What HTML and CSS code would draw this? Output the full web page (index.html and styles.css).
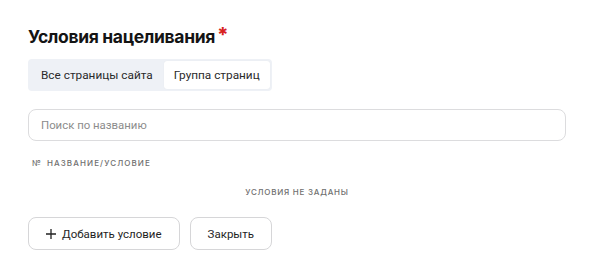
FILE: index.html
```html
<!DOCTYPE html>
<html lang="ru">
<head>
<meta charset="utf-8">
<link rel="stylesheet" href="styles.css">
</head>
<body>
<div class="panel">
  <h2 class="title">Условия нацеливания<span class="req">*</span></h2>
  <div class="tabs">
    <div class="tab">Все страницы сайта</div>
    <div class="tab active">Группа страниц</div>
  </div>
  <div class="search">
    <input class="search-input" type="text" placeholder="Поиск по названию">
  </div>
  <div class="thead"><span class="num">№</span><span>Название/условие</span></div>
  <div class="empty">Условия не заданы</div>
  <div class="actions">
    <button class="btn"><svg class="plus" width="10" height="10" viewBox="0 0 10 10"><path d="M5 0v10M0 5h10" stroke="#222" stroke-width="1.3"/></svg>Добавить условие</button>
    <button class="btn">Закрыть</button>
  </div>
</div>
</body>
</html>
```
FILE: styles.css
```css
html, body {
  margin: 0;
  padding: 0;
  background: #fff;
}
body {
  font-family: "Roboto", "Noto Sans", sans-serif;
  color: #1f1f1f;
}
.panel {
  padding: 25px 26px 0 28px;
}
.title {
  margin: 0;
  font-family: "Inter", "Noto Sans", sans-serif;
  font-size: 17.5px;
  font-weight: 700;
  line-height: 24px;
  letter-spacing: -0.35px;
  color: #141414;
  display: flex;
  align-items: flex-start;
}
.req {
  color: #d8231e;
  font-size: 20px;
  font-weight: 800;
  margin-left: 2px;
  line-height: 20px;
}
.tabs {
  margin-top: 10px;
  display: inline-flex;
  background: #eef1f6;
  border-radius: 4px;
  padding: 2px;
}
.tab {
  font-size: 11.8px;
  line-height: 28px;
  padding: 0 11px 0 11px;
  color: #2a2a2a;
  border-radius: 3px;
}
.tab.active {
  background: #fff;
  padding: 0 10px;
  box-shadow: 0 0 1px rgba(0,0,0,0.08);
}
.search {
  margin-top: 18px;
}
.search-input {
  box-sizing: border-box;
  width: 538px;
  height: 32px;
  border: 1px solid #dcdcde;
  border-radius: 8px;
  padding: 0 12px;
  font-family: inherit;
  font-size: 11.4px;
  outline: none;
}
.search-input::placeholder {
  color: #8c8c8c;
}
.thead {
  margin-top: 16px;
  padding-left: 4px;
  font-family: "Inter", "Noto Sans", sans-serif;
  font-size: 8px;
  letter-spacing: 1.1px;
  text-transform: uppercase;
  color: #6f6f6f;
  font-weight: 500;
  line-height: 12px;
}
.num {
  margin-right: 5px;
}
.empty {
  margin-top: 17px;
  text-align: center;
  font-family: "Inter", "Noto Sans", sans-serif;
  font-size: 8px;
  letter-spacing: 0.75px;
  text-transform: uppercase;
  color: #6f6f6f;
  font-weight: 500;
  line-height: 12px;
}
.actions {
  margin-top: 19px;
  display: flex;
  gap: 10px;
}
.btn {
  height: 33px;
  border: 1px solid #d6d6d8;
  border-radius: 8px;
  background: #fff;
  font-family: inherit;
  font-size: 11.5px;
  color: #1f1f1f;
  padding: 0 17px;
  display: flex;
  align-items: center;
}
.plus {
  margin-right: 6px;
}
```
